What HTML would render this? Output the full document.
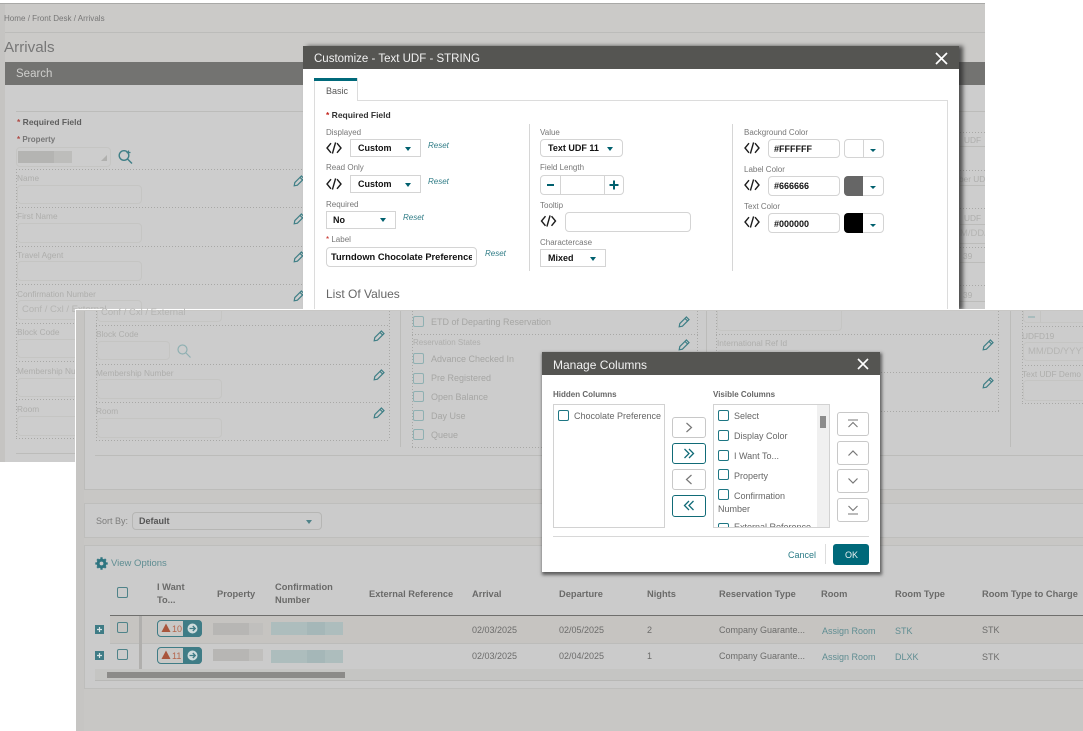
<!DOCTYPE html>
<html><head><meta charset="utf-8"><title>Arrivals</title>
<style>
html,body{margin:0;padding:0;background:#fff}
#r{position:relative;width:1083px;height:731px;overflow:hidden;background:#fff;font-family:"Liberation Sans",sans-serif;filter:blur(.35px)}
#r div,#r svg,#r span.t{position:absolute;box-sizing:border-box}
.t{white-space:nowrap;line-height:12px;margin-top:-6px;font-size:8px;color:#5f5f5f}
.f{color:#aeaeac;font-size:8.3px}.m{color:#a6a6a4}.bd{font-weight:bold}.lb{color:#777}
.g{color:#6c6c6b;font-size:9px}.hd{font-weight:bold;color:#6a6a69;font-size:9.3px}.lk{color:#5f8d92;font-size:9px}
.i{border:1px solid #c5c5c3;border-radius:4px}
.w{border:1px solid #d4d4d4;border-radius:4px;background:#fff}
.s{border:1px solid #d4d4d4;background:#fff}
.dh{height:1px;background:repeating-linear-gradient(90deg,#a8a8a6 0 1px,transparent 1px 3px)}
.dv{width:1px;background:repeating-linear-gradient(180deg,#a8a8a6 0 1px,transparent 1px 3px)}
.c{border:1px solid #8fb0b2;border-radius:2px}
.ck{border:1.5px solid #1d7683;border-radius:2px;width:11px;height:11px;background:#fff}
.ln{background:#bcbcba}
.btn{border:1px solid #c8c8c8;border-radius:3px;background:#fff}
.bt{border:1.5px solid #116b77;border-radius:3px;background:#fff}
.car{width:0;height:0;border-left:3.5px solid transparent;border-right:3.5px solid transparent;border-top:4px solid #00606e}
.rs{font-style:italic;color:#2f7c86;font-size:8px}
.x{font-size:9px;color:#111;font-weight:bold}
</style></head><body>
<svg width="0" height="0" style="position:absolute"><defs>
<symbol id="p" viewBox="0 0 12 12"><path d="M1.2 10.8L1.8 7.6L8.4 1L11 3.6L4.4 10.2ZM7 2.4L9.6 5" fill="none" stroke="#3f7f86" stroke-width="1.2"/></symbol>
<symbol id="k" viewBox="0 0 16 12"><path d="M5 1.2L1 6L5 10.8M11 1.2L15 6L11 10.8M9.6 .4L6.4 11.6" fill="none" stroke="#1c1c1c" stroke-width="1.4"/></symbol>
<symbol id="q" viewBox="0 0 14 14"><circle cx="5.5" cy="5.5" r="4.5" fill="none" stroke="#8fb0b2" stroke-width="1.2"/><path d="M9 9L13.5 13.5" stroke="#8fb0b2" stroke-width="1.2"/></symbol>
</defs></svg>
<div id="r">

<!-- back layer -->
<div style="left:0;top:3px;width:985px;height:459px;background:#cbcac8;border-top:1px solid #a9a9a7"></div>
<div style="left:0;top:4px;width:5px;height:458px;background:#c5c4c2"></div>
<div class="ln" style="left:5px;top:32px;width:980px;height:1px"></div>
<span class="t lb" style="left:4px;top:19px;font-size:8.05px">Home / Front Desk / Arrivals</span>
<span class="t lb" style="left:4px;top:48px;font-size:15.2px">Arrivals</span>
<div style="left:5px;top:85px;width:980px;height:377px;background:#cdcdcd"></div>
<div style="left:5px;top:62px;width:980px;height:23px;background:#737371"></div>
<span class="t" style="left:16px;top:74px;font-size:11.5px;color:#cfcfcd">Search</span>
<div class="ln" style="left:16px;top:111px;width:969px;height:1px"></div>
<span class="t bd" style="left:17px;top:122px;font-size:8.5px"><span style="color:#b04a44">*</span> Required Field</span>
<span class="t bd" style="left:17px;top:140px;font-size:8px;color:#777"><span style="color:#b04a44">*</span> Property</span>
<div class="i" style="left:16px;top:147px;width:95px;height:20px"></div>
<div style="left:18px;top:151px;width:36px;height:12px;background:#b4b4b2"></div>
<div style="left:54px;top:151px;width:18px;height:12px;background:#bdbdbb"></div>
<div style="left:101px;top:155px;width:0;height:0;border-left:6px solid transparent;border-bottom:6px solid #b0b0ae"></div>
<svg style="left:118px;top:149px" width="15" height="15" viewBox="0 0 15 15"><circle cx="6" cy="6.5" r="4.8" fill="none" stroke="#3f7f86" stroke-width="1.4"/><path d="M9.5 10L14 14.5" stroke="#3f7f86" stroke-width="1.4"/><path d="M8.5 3.5H12.5M10.5 1.500V5.500" stroke="#3f7f86" stroke-width="1.2"/></svg>
<div class="dv" style="left:16px;top:169px;height:269px"></div>
<div class="dh" style="left:16px;top:169px;width:290px"></div>
<div class="dh" style="left:16px;top:207px;width:290px"></div>
<div class="dh" style="left:16px;top:246px;width:290px"></div>
<div class="dh" style="left:16px;top:284px;width:290px"></div>
<div class="dh" style="left:16px;top:323px;width:60px"></div>
<div class="dh" style="left:16px;top:361px;width:60px"></div>
<div class="dh" style="left:16px;top:399px;width:60px"></div>
<div class="dh" style="left:16px;top:438px;width:60px"></div>
<span class="t f" style="left:17px;top:178px">Name</span>
<div class="i" style="left:17px;top:185px;width:125px;height:19px"></div>
<span class="t f" style="left:17px;top:216px">First Name</span>
<div class="i" style="left:17px;top:223px;width:125px;height:20px"></div>
<span class="t f" style="left:17px;top:255px">Travel Agent</span>
<div class="i" style="left:17px;top:261px;width:125px;height:20px"></div>
<span class="t f" style="left:17px;top:294px">Confirmation Number</span>
<div class="i" style="left:17px;top:300px;width:125px;height:20px"></div>
<span class="t" style="left:22px;top:310px;font-size:9.5px;color:#b5b5b3">Conf / Cxl / External</span>
<span class="t f" style="left:17px;top:332px">Block Code</span>
<div class="i" style="left:17px;top:339px;width:70px;height:19px"></div>
<span class="t f" style="left:17px;top:371px">Membership Number</span>
<div class="i" style="left:17px;top:378px;width:125px;height:19px"></div>
<span class="t f" style="left:17px;top:409px">Room</span>
<div class="i" style="left:17px;top:416px;width:125px;height:20px"></div>
<div class="ln" style="left:16px;top:453px;width:60px;height:1px"></div>
<svg style="left:293px;top:175px" width="12" height="12"><use href="#p"/></svg>
<svg style="left:293px;top:213px" width="12" height="12"><use href="#p"/></svg>
<svg style="left:293px;top:251px" width="12" height="12"><use href="#p"/></svg>
<svg style="left:293px;top:290px" width="12" height="12"><use href="#p"/></svg>
<!-- back right sliver -->
<div class="dh" style="left:960px;top:132px;width:25px"></div><div class="ln" style="left:960px;top:146px;width:25px;height:1px"></div>
<div class="dh" style="left:960px;top:170px;width:25px"></div><div class="ln" style="left:960px;top:185px;width:25px;height:1px"></div>
<div class="dh" style="left:960px;top:208px;width:25px"></div><div class="ln" style="left:960px;top:224px;width:25px;height:1px"></div>
<div class="ln" style="left:960px;top:243px;width:25px;height:1px"></div>
<div class="dh" style="left:960px;top:247px;width:25px"></div><div class="ln" style="left:960px;top:262px;width:25px;height:1px"></div>
<div class="dh" style="left:960px;top:285px;width:25px"></div><div class="ln" style="left:960px;top:301px;width:25px;height:1px"></div>
<div style="left:960px;top:132px;width:25px;height:175px;overflow:hidden">
<span class="t f" style="left:4px;top:8px">UDF</span>
<span class="t f" style="left:-1px;top:47px">ber UDF</span>
<span class="t f" style="left:4px;top:86px">UDF</span>
<span class="t" style="left:0;top:102px;font-size:9.5px;color:#b5b5b3">M/DD/YYYY</span>
<span class="t f" style="left:3px;top:124px">39</span>
<span class="t f" style="left:3px;top:163px">39</span>
</div>

<!-- customize dialog -->
<div style="left:303px;top:46px;width:656px;height:264px;background:#fff;box-shadow:4px 0 4px rgba(40,40,40,.75)"></div>
<div style="left:303px;top:46px;width:656px;height:23px;background:#555552"></div>
<span class="t" style="left:314px;top:59px;font-size:11.5px;color:#f2f2f2">Customize - Text UDF - STRING</span>
<svg style="left:935px;top:52px" width="13" height="13"><path d="M1 1L12 12M12 1L1 12" stroke="#fff" stroke-width="1.7"/></svg>
<div style="left:314px;top:100px;width:634px;height:210px;border:1px solid #dcdcdc;border-bottom:0"></div>
<div style="left:314px;top:78px;width:44px;height:23px;background:#fff;border-left:1px solid #dcdcdc;border-right:1px solid #dcdcdc"></div>
<div style="left:314px;top:78px;width:43px;height:3px;background:#00697a"></div>
<span class="t" style="left:326px;top:91px;font-size:9px;color:#555">Basic</span>
<span class="t bd" style="left:326px;top:115px;font-size:8.5px;color:#333"><span style="color:#c3231c">*</span> Required Field</span>

<span class="t lb" style="left:326px;top:133px">Displayed</span>
<svg style="left:326px;top:142px" width="16" height="12"><use href="#k"/></svg>
<div class="s" style="left:350px;top:139px;width:71px;height:18px"></div>
<span class="t x" style="left:358px;top:148px">Custom</span><div class="car" style="left:405px;top:147px"></div>
<span class="t rs" style="left:428px;top:146px">Reset</span>

<span class="t lb" style="left:326px;top:168px">Read Only</span>
<svg style="left:326px;top:178px" width="16" height="12"><use href="#k"/></svg>
<div class="s" style="left:350px;top:175px;width:71px;height:18px"></div>
<span class="t x" style="left:358px;top:184px">Custom</span><div class="car" style="left:405px;top:183px"></div>
<span class="t rs" style="left:428px;top:182px">Reset</span>

<span class="t lb" style="left:326px;top:205px">Required</span>
<div class="s" style="left:326px;top:211px;width:70px;height:18px"></div>
<span class="t x" style="left:333px;top:220px">No</span><div class="car" style="left:380px;top:218px"></div>
<span class="t rs" style="left:403px;top:218px">Reset</span>

<span class="t lb" style="left:326px;top:240px"><span style="color:#c3231c">*</span> Label</span>
<div class="w" style="left:326px;top:247px;width:151px;height:20px"></div>
<span class="t x" style="left:331px;top:257px;width:141px;overflow:hidden;font-size:9.3px">Turndown Chocolate Preference</span>
<span class="t rs" style="left:485px;top:254px">Reset</span>

<div style="left:529px;top:124px;width:1px;height:147px;background:#d6d6d6"></div>
<span class="t lb" style="left:540px;top:133px">Value</span>
<div class="w" style="left:540px;top:139px;width:83px;height:18px"></div>
<span class="t x" style="left:548px;top:148px">Text UDF 11</span><div class="car" style="left:607px;top:147px"></div>
<span class="t lb" style="left:540px;top:168px">Field Length</span>
<div class="w" style="left:540px;top:175px;width:84px;height:20px"></div>
<div style="left:560px;top:175px;width:1px;height:20px;background:#d4d4d4"></div>
<div style="left:604px;top:175px;width:1px;height:20px;background:#d4d4d4"></div>
<div style="left:547px;top:184px;width:7px;height:2px;background:#00606e"></div>
<svg style="left:609px;top:180px" width="10" height="10"><path d="M5 .5V9.5M.5 5H9.5" stroke="#00606e" stroke-width="2"/></svg>
<span class="t lb" style="left:540px;top:206px">Tooltip</span>
<svg style="left:540px;top:215px" width="17" height="12"><use href="#k"/></svg>
<div class="w" style="left:565px;top:212px;width:126px;height:20px"></div>
<span class="t lb" style="left:540px;top:243px">Charactercase</span>
<div class="s" style="left:540px;top:249px;width:66px;height:18px"></div>
<span class="t x" style="left:548px;top:258px">Mixed</span><div class="car" style="left:590px;top:257px"></div>

<div style="left:732px;top:124px;width:1px;height:147px;background:#d6d6d6"></div>
<span class="t lb" style="left:744px;top:133px">Background Color</span>
<svg style="left:744px;top:142px" width="16" height="12"><use href="#k"/></svg>
<div class="w" style="left:768px;top:139px;width:72px;height:19px"></div>
<span class="t x" style="left:774px;top:149px">#FFFFFF</span>
<div class="w" style="left:844px;top:139px;width:40px;height:19px"></div>
<div style="left:863px;top:139px;width:1px;height:19px;background:#d4d4d4"></div><div class="car" style="left:870px;top:149px;border-top-width:3px"></div>
<span class="t lb" style="left:744px;top:170px">Label Color</span>
<svg style="left:744px;top:179px" width="16" height="12"><use href="#k"/></svg>
<div class="w" style="left:768px;top:176px;width:72px;height:20px"></div>
<span class="t x" style="left:774px;top:186px">#666666</span>
<div class="w" style="left:844px;top:176px;width:40px;height:20px"></div>
<div style="left:844px;top:176px;width:19px;height:20px;background:#666;border-radius:4px 0 0 4px"></div><div class="car" style="left:870px;top:186px;border-top-width:3px"></div>
<span class="t lb" style="left:744px;top:207px">Text Color</span>
<svg style="left:744px;top:216px" width="16" height="12"><use href="#k"/></svg>
<div class="w" style="left:768px;top:213px;width:72px;height:20px"></div>
<span class="t x" style="left:774px;top:224px">#000000</span>
<div class="w" style="left:844px;top:213px;width:40px;height:20px"></div>
<div style="left:844px;top:213px;width:19px;height:20px;background:#000;border-radius:4px 0 0 4px"></div><div class="car" style="left:870px;top:224px;border-top-width:3px"></div>
<span class="t" style="left:326px;top:294px;font-size:12px;color:#666">List Of Values</span>
<div style="left:326px;top:309px;width:610px;height:1px;background:#d8d8d8"></div>

<!-- front layer -->
<div style="left:75px;top:309px;width:1008px;height:422px;background:#c8c7c5;border-left:1px solid #fff;border-top:1.5px solid #fff"></div>
<div style="left:76px;top:311px;width:8px;height:420px;background:#c6c5c3"></div>
<div style="left:84px;top:311px;width:999px;height:179px;background:#cccccc;border-left:1px solid #bcbcba;border-bottom:1px solid #bcbcba"></div>
<div class="ln" style="left:95px;top:455px;width:988px;height:1px"></div>

<span class="t" style="left:101px;top:313px;font-size:9.5px;color:#b5b5b3">Conf / Cxl / External</span>
<div class="i" style="left:97px;top:311px;width:125px;height:11px;border-top:0;border-radius:0 0 4px 4px"></div>
<div class="dv" style="left:96px;top:311px;height:129px"></div>
<div class="dv" style="left:389px;top:311px;height:129px"></div>
<div class="dh" style="left:96px;top:325px;width:294px"></div>
<div class="dh" style="left:96px;top:364px;width:294px"></div>
<div class="dh" style="left:96px;top:402px;width:294px"></div>
<div class="dh" style="left:96px;top:440px;width:294px"></div>
<span class="t f" style="left:96px;top:334px">Block Code</span>
<div class="i" style="left:97px;top:341px;width:73px;height:19px"></div>
<svg style="left:177px;top:344px" width="14" height="14"><use href="#q"/></svg>
<span class="t f" style="left:96px;top:373px">Membership Number</span>
<div class="i" style="left:97px;top:379px;width:125px;height:20px"></div>
<span class="t f" style="left:96px;top:411px">Room</span>
<div class="i" style="left:97px;top:418px;width:125px;height:20px"></div>
<svg style="left:373px;top:330px" width="12" height="12"><use href="#p"/></svg>
<svg style="left:373px;top:369px" width="12" height="12"><use href="#p"/></svg>
<svg style="left:373px;top:407px" width="12" height="12"><use href="#p"/></svg>
<div class="ln" style="left:400px;top:311px;width:1px;height:136px"></div>

<div class="dv" style="left:412px;top:311px;height:136px"></div>
<div class="dv" style="left:697px;top:311px;height:136px"></div>
<div class="dh" style="left:412px;top:334px;width:286px"></div>
<div class="dh" style="left:412px;top:447px;width:286px"></div>
<div class="c" style="left:413px;top:316px;width:11px;height:11px"></div><span class="t m" style="left:431px;top:322px;font-size:9px">ETD of Departing Reservation</span>
<span class="t f" style="left:413px;top:343px;font-size:8px">Reservation States</span>
<div class="c" style="left:413px;top:353px;width:11px;height:11px"></div><span class="t m" style="left:431px;top:359px;font-size:9px">Advance Checked In</span>
<div class="c" style="left:413px;top:373px;width:11px;height:11px"></div><span class="t m" style="left:431px;top:378px;font-size:9px">Pre Registered</span>
<div class="c" style="left:413px;top:391px;width:11px;height:11px"></div><span class="t m" style="left:431px;top:397px;font-size:9px">Open Balance</span>
<div class="c" style="left:413px;top:410px;width:11px;height:11px"></div><span class="t m" style="left:431px;top:416px;font-size:9px">Day Use</span>
<div class="c" style="left:413px;top:429px;width:11px;height:11px"></div><span class="t m" style="left:431px;top:435px;font-size:9px">Queue</span>
<svg style="left:678px;top:316px" width="12" height="12"><use href="#p"/></svg>
<svg style="left:678px;top:339px" width="12" height="12"><use href="#p"/></svg>
<div class="ln" style="left:706px;top:311px;width:1px;height:136px"></div>

<div class="i" style="left:717px;top:311px;width:125px;height:20px;border-top:0;border-radius:0 0 4px 4px"></div>
<div class="dv" style="left:716px;top:311px;height:100px"></div>
<div class="dv" style="left:998px;top:311px;height:100px"></div>
<div class="dh" style="left:716px;top:334px;width:283px"></div>
<div class="dh" style="left:716px;top:372px;width:283px"></div>
<div class="dh" style="left:716px;top:411px;width:283px"></div>
<span class="t f" style="left:717px;top:343px">International Ref Id</span>
<div class="i" style="left:717px;top:350px;width:84px;height:20px"></div>
<svg style="left:982px;top:339px" width="12" height="12"><use href="#p"/></svg>
<svg style="left:982px;top:377px" width="12" height="12"><use href="#p"/></svg>
<div class="ln" style="left:1010px;top:311px;width:1px;height:136px"></div>

<div class="dv" style="left:1022px;top:311px;height:92px"></div>
<div class="i" style="left:1023px;top:311px;width:60px;height:12px;border-top:0;border-right:0;border-radius:0 0 0 4px"></div>
<div style="left:1040px;top:311px;width:1px;height:12px;background:#c4c4c2"></div>
<div style="left:1028px;top:316px;width:7px;height:1.5px;background:#a9bcbd"></div>
<div class="dh" style="left:1022px;top:326px;width:61px"></div>
<div class="dh" style="left:1022px;top:365px;width:61px"></div>
<div class="dh" style="left:1022px;top:403px;width:61px"></div>
<span class="t f" style="left:1022px;top:336px">UDFD19</span>
<div class="i" style="left:1023px;top:342px;width:70px;height:19px"></div>
<span class="t" style="left:1028px;top:352px;font-size:9.5px;color:#b5b5b3">MM/DD/YYYY</span>
<span class="t f" style="left:1022px;top:374px">Text UDF Demo</span>
<div class="i" style="left:1023px;top:380px;width:70px;height:21px"></div>

<!-- sort bar -->
<div style="left:84px;top:503px;width:999px;height:35px;background:#cbcbcb;border:1px solid #bebebc;border-right:0"></div>
<span class="t" style="left:96px;top:521px;font-size:9px;color:#7d7d7c">Sort By:</span>
<div class="i" style="left:132px;top:512px;width:190px;height:18px;border-color:#b6b6b4"></div>
<span class="t bd" style="left:139px;top:521px;font-size:9px;color:#555">Default</span>
<div class="car" style="left:306px;top:520px;border-top-color:#4f8389"></div>

<!-- grid panel -->
<div style="left:84px;top:545px;width:999px;height:144px;background:#cbcbcb;border:1px solid #bebebc;border-right:0"></div>
<svg style="left:95px;top:557px" width="13" height="13" viewBox="0 0 13 13"><circle cx="6.5" cy="6.5" r="3.4" fill="none" stroke="#2f7580" stroke-width="3"/><path d="M6.5 .3V3M6.5 10V12.7M.3 6.5H3M10 6.5H12.7M2.2 2.2L4 4M9 9L10.800 10.800M10.800 2.200L9 4M4 9L2.200 10.800" stroke="#2f7580" stroke-width="2.2"/></svg>
<span class="t lk" style="left:111px;top:563.5px;font-size:9.5px">View Options</span>
<div class="c" style="left:117px;top:587px;width:11px;height:11px;border-color:#4f8389"></div>
<span class="t hd" style="left:157px;top:587px">I Want</span><span class="t hd" style="left:157px;top:600px">To...</span>
<span class="t hd" style="left:217px;top:594px">Property</span>
<span class="t hd" style="left:275px;top:587px">Confirmation</span><span class="t hd" style="left:275px;top:600px">Number</span>
<span class="t hd" style="left:369px;top:593.5px">External Reference</span>
<span class="t hd" style="left:472px;top:593.5px">Arrival</span>
<span class="t hd" style="left:559px;top:593.5px">Departure</span>
<span class="t hd" style="left:647px;top:593.5px">Nights</span>
<span class="t hd" style="left:719px;top:593.5px">Reservation Type</span>
<span class="t hd" style="left:821px;top:593.5px">Room</span>
<span class="t hd" style="left:895px;top:593.5px">Room Type</span>
<span class="t hd" style="left:982px;top:593.5px">Room Type to Charge</span>
<div style="left:110px;top:615px;width:973px;height:1px;background:#6f6f6d"></div>
<div style="left:110px;top:616px;width:973px;height:27px;background:#c6c4c1"></div>
<div style="left:110px;top:643px;width:973px;height:1px;background:#bcbcba"></div>
<div style="left:95px;top:669px;width:988px;height:12px;background:#c5c5c3;border-bottom:1px solid #b8b8b6"></div>
<div style="left:107px;top:672px;width:238px;height:6px;background:#8c8b89"></div>
<div style="left:139px;top:616px;width:3px;height:53px;background:#b0afad"></div>

<div style="left:95px;top:625px;width:9px;height:9px;background:#3f7c86"></div>
<svg style="left:95px;top:625px" width="9" height="9"><path d="M4.5 2V7M2 4.5H7" stroke="#d8e4e5" stroke-width="1.2"/></svg>
<div style="left:95px;top:651px;width:9px;height:9px;background:#3f7c86"></div>
<svg style="left:95px;top:651px" width="9" height="9"><path d="M4.5 2V7M2 4.5H7" stroke="#d8e4e5" stroke-width="1.2"/></svg>
<div class="c" style="left:117px;top:622px;width:11px;height:11px;border-color:#4f8389"></div>
<div class="c" style="left:117px;top:649px;width:11px;height:11px;border-color:#4f8389"></div>

<div style="left:157px;top:620px;width:45px;height:17px;background:#c9c8c6;border:1px solid #3f7c86;border-radius:4px"></div>
<div style="left:183px;top:620px;width:19px;height:17px;background:#3f7c86;border-radius:0 4px 4px 0"></div>
<svg style="left:161px;top:623px" width="10" height="10"><path d="M5 .5L9.5 9H.5Z" fill="#a9553c"/></svg>
<span class="t" style="left:172px;top:628.5px;font-size:9px;color:#b4654c">10</span>
<svg style="left:187px;top:623px" width="11" height="11"><circle cx="5.5" cy="5.5" r="5" fill="#cfdcdd"/><path d="M2.5 5.5H8M5.8 3L8.3 5.5L5.8 8" fill="none" stroke="#3f7c86" stroke-width="1.3"/></svg>
<div style="left:157px;top:647px;width:45px;height:17px;background:#c9c8c6;border:1px solid #3f7c86;border-radius:4px"></div>
<div style="left:183px;top:647px;width:19px;height:17px;background:#3f7c86;border-radius:0 4px 4px 0"></div>
<svg style="left:161px;top:650px" width="10" height="10"><path d="M5 .5L9.5 9H.5Z" fill="#a9553c"/></svg>
<span class="t" style="left:172px;top:656px;font-size:9px;color:#b4654c">11</span>
<svg style="left:187px;top:650px" width="11" height="11"><circle cx="5.5" cy="5.5" r="5" fill="#cfdcdd"/><path d="M2.5 5.5H8M5.8 3L8.3 5.5L5.8 8" fill="none" stroke="#3f7c86" stroke-width="1.3"/></svg>

<div style="left:213px;top:623px;width:36px;height:12px;background:#b7b6b4"></div><div style="left:249px;top:623px;width:14px;height:12px;background:#c0bfbd"></div>
<div style="left:213px;top:649px;width:36px;height:12px;background:#b7b6b4"></div><div style="left:249px;top:649px;width:14px;height:12px;background:#c0bfbd"></div>
<div style="left:271px;top:622px;width:72px;height:13px;background:#adbdbd"></div><div style="left:307px;top:622px;width:18px;height:13px;background:#a5b7b8"></div>
<div style="left:271px;top:650px;width:72px;height:13px;background:#adbdbd"></div><div style="left:307px;top:650px;width:18px;height:13px;background:#a5b7b8"></div>

<span class="t g" style="left:472px;top:630px">02/03/2025</span><span class="t g" style="left:559px;top:630px">02/05/2025</span><span class="t g" style="left:647px;top:630px">2</span><span class="t g" style="left:719px;top:630px">Company Guarante...</span><span class="t lk" style="left:822px;top:631px">Assign Room</span><span class="t lk" style="left:895px;top:631px">STK</span><span class="t g" style="left:982px;top:630px">STK</span>
<span class="t g" style="left:472px;top:656px">02/03/2025</span><span class="t g" style="left:559px;top:656px">02/04/2025</span><span class="t g" style="left:647px;top:656px">1</span><span class="t g" style="left:719px;top:656px">Company Guarante...</span><span class="t lk" style="left:822px;top:657px">Assign Room</span><span class="t lk" style="left:895px;top:657px">DLXK</span><span class="t g" style="left:982px;top:657px">STK</span>

<!-- manage columns -->
<div style="left:542px;top:352px;width:338px;height:220px;background:#fff;box-shadow:1px 2px 3px 1px rgba(50,50,50,.7)"></div>
<div style="left:542px;top:352px;width:338px;height:23px;background:#555552"></div>
<span class="t" style="left:553px;top:364.500px;font-size:12px;color:#f2f2f2">Manage Columns</span>
<svg style="left:857px;top:358px" width="12" height="12"><path d="M1 1L11 11M11 1L1 11" stroke="#fff" stroke-width="1.6"/></svg>
<span class="t bd" style="left:553px;top:395px;font-size:8px;color:#666">Hidden Columns</span>
<span class="t bd" style="left:713px;top:395px;font-size:8px;color:#666">Visible Columns</span>
<div style="left:553px;top:404px;width:112px;height:124px;border:1px solid #d2d2d2"></div>
<div class="ck" style="left:558px;top:410px"></div>
<span class="t" style="left:574px;top:416px;font-size:9px;color:#666">Chocolate Preference</span>
<div style="left:713px;top:404px;width:117px;height:124px;border:1px solid #d2d2d2;overflow:hidden">
<div style="right:0;top:0;width:12px;height:122px;background:#f0f0f0"></div>
<div style="left:106px;top:11px;width:6px;height:12px;background:#8c8c8c"></div>
<div class="ck" style="left:4px;top:5px"></div><span class="t" style="left:20px;top:11px;font-size:9px;color:#666">Select</span>
<div class="ck" style="left:4px;top:25px"></div><span class="t" style="left:20px;top:31px;font-size:9px;color:#666">Display Color</span>
<div class="ck" style="left:4px;top:45px"></div><span class="t" style="left:20px;top:51px;font-size:9px;color:#666">I Want To...</span>
<div class="ck" style="left:4px;top:64px"></div><span class="t" style="left:20px;top:71px;font-size:9px;color:#666">Property</span>
<div class="ck" style="left:4px;top:84px"></div><span class="t" style="left:20px;top:91px;font-size:9px;color:#666">Confirmation</span>
<span class="t" style="left:4px;top:104px;font-size:9px;color:#666">Number</span>
<div class="ck" style="left:4px;top:118px"></div><span class="t" style="left:20px;top:122px;font-size:9px;color:#666">External Reference</span>
</div>
<div class="btn" style="left:672px;top:417px;width:34px;height:21px"></div>
<svg style="left:684px;top:422px" width="10" height="11"><path d="M2.5 1L7.5 5.5L2.5 10" fill="none" stroke="#777" stroke-width="1.2"/></svg>
<div class="bt" style="left:672px;top:443px;width:34px;height:21px"></div>
<svg style="left:683px;top:448px" width="12" height="11"><path d="M1.5 1L6 5.5L1.5 10M6 1L10.5 5.5L6 10" fill="none" stroke="#116b77" stroke-width="1.3"/></svg>
<div class="btn" style="left:672px;top:469px;width:34px;height:21px"></div>
<svg style="left:684px;top:474px" width="10" height="11"><path d="M7.5 1L2.5 5.5L7.5 10" fill="none" stroke="#777" stroke-width="1.2"/></svg>
<div class="bt" style="left:672px;top:495px;width:34px;height:22px"></div>
<svg style="left:683px;top:500px" width="12" height="11"><path d="M6 1L1.5 5.5L6 10M10.5 1L6 5.5L10.5 10" fill="none" stroke="#116b77" stroke-width="1.3"/></svg>
<div class="btn" style="left:837px;top:412px;width:32px;height:24px"></div>
<svg style="left:847px;top:419px" width="12" height="10"><path d="M1 1H11M1.5 8L6 3.5L10.5 8" fill="none" stroke="#777" stroke-width="1.1"/></svg>
<div class="btn" style="left:837px;top:441px;width:32px;height:24px"></div>
<svg style="left:847px;top:449px" width="12" height="8"><path d="M1.5 6.5L6 2L10.5 6.5" fill="none" stroke="#777" stroke-width="1.2"/></svg>
<div class="btn" style="left:837px;top:469px;width:32px;height:24px"></div>
<svg style="left:847px;top:477px" width="12" height="8"><path d="M1.5 1.5L6 6L10.5 1.5" fill="none" stroke="#777" stroke-width="1.2"/></svg>
<div class="btn" style="left:837px;top:498px;width:32px;height:24px"></div>
<svg style="left:847px;top:505px" width="12" height="10"><path d="M1.5 1L6 5.5L10.5 1M1 9H11" fill="none" stroke="#777" stroke-width="1.1"/></svg>
<div style="left:553px;top:536px;width:316px;height:1px;background:#d8d8d8"></div>
<span class="t" style="left:788px;top:555px;font-size:9px;color:#2a7b86">Cancel</span>
<div style="left:825px;top:544px;width:1px;height:20px;background:#ddd"></div>
<div style="left:833px;top:544px;width:36px;height:21px;background:#00697a;border-radius:3px"></div>
<span class="t" style="left:845px;top:555px;font-size:9px;color:#e8f0f1">OK</span>

</div>
</body></html>
